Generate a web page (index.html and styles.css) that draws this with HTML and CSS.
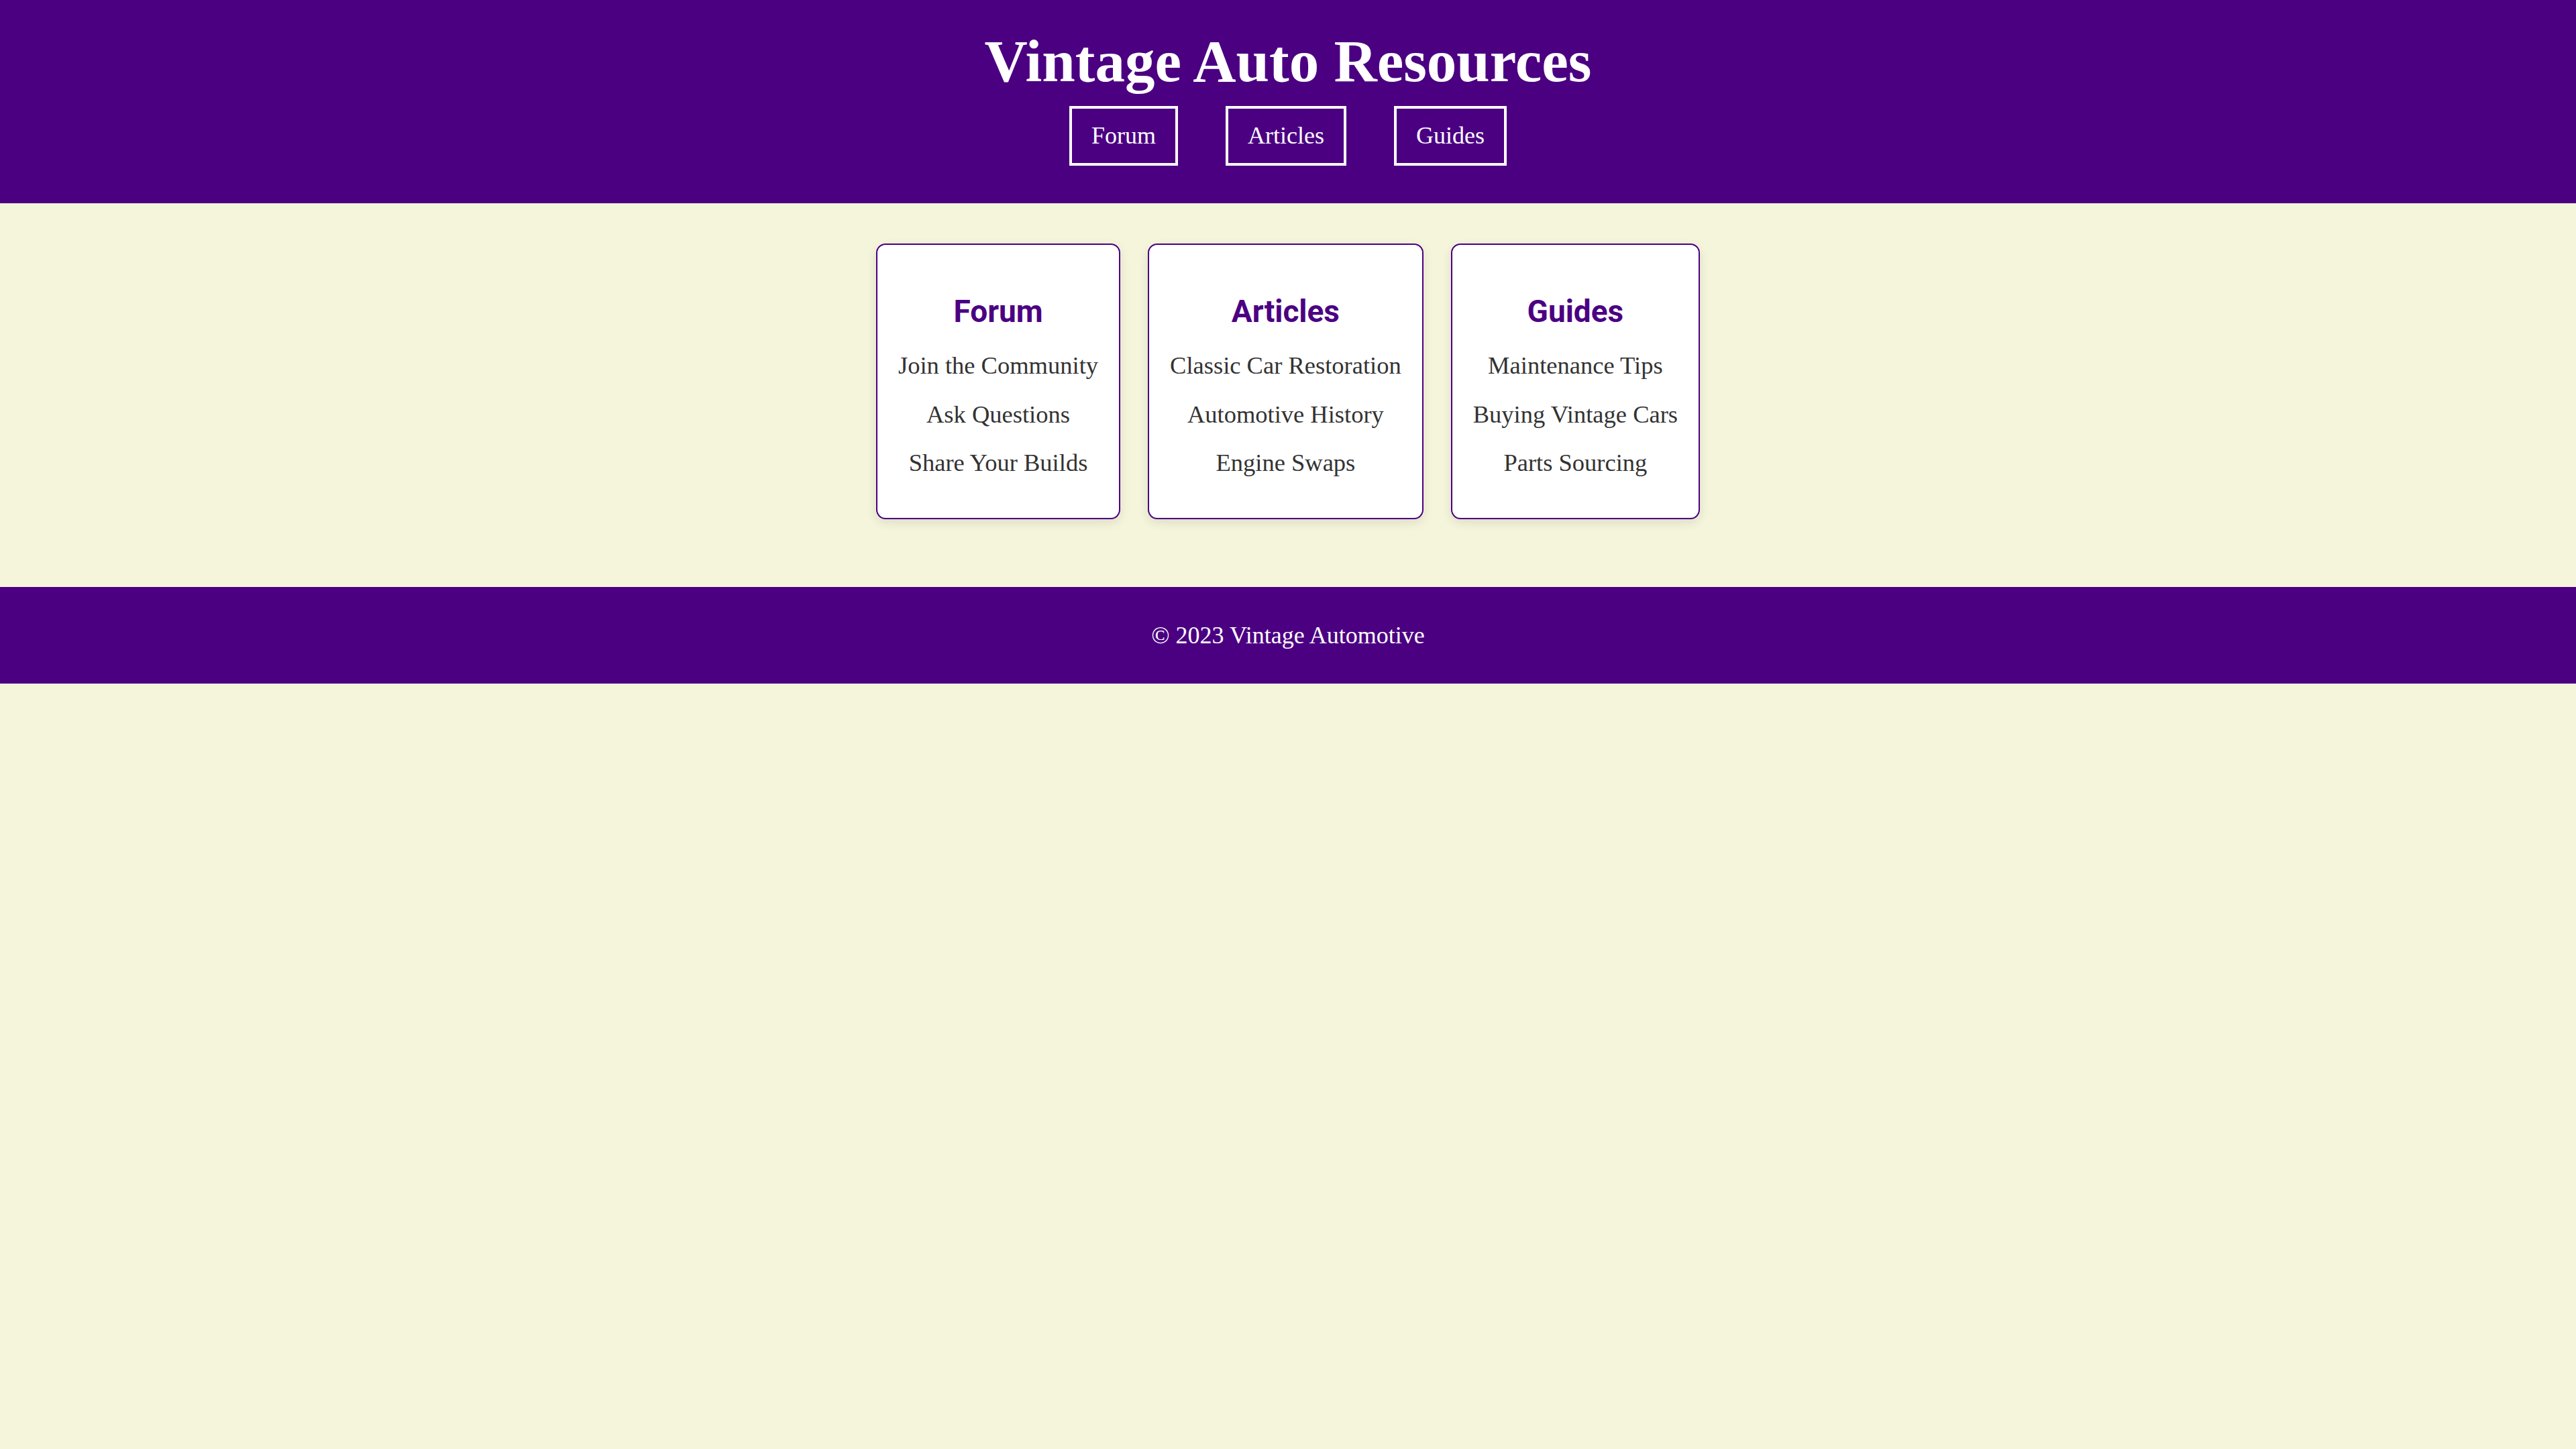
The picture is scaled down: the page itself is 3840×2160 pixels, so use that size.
FILE: index.html
```html
<!DOCTYPE html>
<html lang="en">
<head>
<meta charset="utf-8">
<title>Vintage Auto Resources</title>
<link rel="stylesheet" href="styles.css">
</head>
<body>
<header class="site-header">
  <h1 class="site-title">Vintage Auto Resources</h1>
  <nav class="main-nav">
    <a class="nav-link" href="#forum">Forum</a>
    <a class="nav-link" href="#articles">Articles</a>
    <a class="nav-link" href="#guides">Guides</a>
  </nav>
</header>
<main class="content">
  <section class="card" id="forum">
    <h2 class="card-title">Forum</h2>
    <ul class="card-list">
      <li>Join the Community</li>
      <li>Ask Questions</li>
      <li>Share Your Builds</li>
    </ul>
  </section>
  <section class="card" id="articles">
    <h2 class="card-title">Articles</h2>
    <ul class="card-list">
      <li>Classic Car Restoration</li>
      <li>Automotive History</li>
      <li>Engine Swaps</li>
    </ul>
  </section>
  <section class="card" id="guides">
    <h2 class="card-title">Guides</h2>
    <ul class="card-list">
      <li>Maintenance Tips</li>
      <li>Buying Vintage Cars</li>
      <li>Parts Sourcing</li>
    </ul>
  </section>
</main>
<footer class="site-footer">
  <p class="footer-text">© 2023 Vintage Automotive</p>
</footer>
</body>
</html>
```

FILE: styles.css
```css
* { box-sizing: border-box; }

html, body {
  margin: 0;
  padding: 0;
}

body {
  background: #f5f5dc;
  font-family: "Liberation Serif", "Times New Roman", serif;
  color: #333333;
}

.site-header {
  background: #4b0082;
  color: #ffffff;
  text-align: center;
  padding: 41px 0 56px;
}

.site-title {
  margin: 0;
  font-size: 89px;
  line-height: 100px;
  font-weight: 700;
}

.main-nav {
  display: flex;
  justify-content: center;
  gap: 71px;
  margin-top: 17px;
}

.nav-link {
  display: block;
  color: #ffffff;
  text-decoration: none;
  border: 4px solid #ffffff;
  padding: 20px 29px;
  font-size: 36px;
  line-height: 41px;
}

.content {
  display: flex;
  justify-content: center;
  align-items: flex-start;
  gap: 41px;
  padding: 60px 0 101px;
}

.card {
  background: #ffffff;
  border: 2px solid #4b0082;
  border-radius: 14px;
  box-shadow: 0 5px 15px rgba(0, 0, 0, 0.1);
  padding: 72px 31px 62px;
  text-align: center;
}

.card-title {
  margin: 0 0 34px;
  font-family: Roboto, "Liberation Sans", sans-serif;
  font-weight: 700;
  font-size: 46px;
  line-height: 54px;
  color: #4b0082;
}

.card-list {
  list-style: none;
  margin: 0;
  padding: 0;
  display: flex;
  flex-direction: column;
  gap: 32.5px;
}

.card-list li {
  font-size: 36.5px;
  line-height: 40px;
  white-space: nowrap;
}

.site-footer {
  background: #4b0082;
  color: #ffffff;
  text-align: center;
  padding: 52px 0;
}

.footer-text {
  margin: 0;
  font-size: 36px;
  line-height: 40px;
}
```
